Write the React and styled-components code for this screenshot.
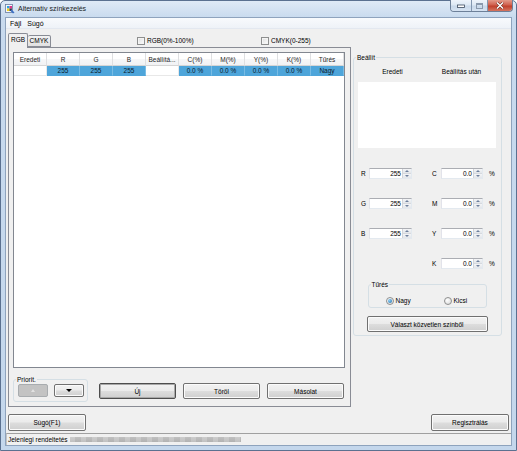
import React from "react";
import styled, { createGlobalStyle, css } from "styled-components";

const GlobalStyle = createGlobalStyle`
  html, body { margin: 0; padding: 0; }
  body {
    width: 517px; height: 451px; overflow: hidden;
    font-family: "Liberation Sans", Arial, sans-serif;
    font-size: 6.5px; color: #000;
  }
  * { box-sizing: border-box; }
`;

const Window = styled.div`
  width: 517px; height: 451px;
  border: 1px solid #5b7190;
  border-radius: 5px 5px 0 0;
  background: linear-gradient(#dfeaf6 0px, #c8daee 17px, #c4d7ec 100%);
  display: flex; flex-direction: column;
`;

const TitleBar = styled.div`
  height: 16px; display: flex; align-items: flex-start;
  padding-left: 4px;
`;

const TitleIcon = styled.svg`
  width: 10px; height: 11px; margin-top: 2px; margin-right: 3px; flex: none;
`;

const TitleText = styled.div`
  font-size: 7px; line-height: 16px; color: #1b1b1b;
`;

const Controls = styled.div`
  margin-left: auto; margin-right: 3px; margin-top: -1px;
  display: flex; height: 12px;
  border: 1px solid #6d8099; border-top: none;
  border-radius: 0 0 4px 4px; overflow: hidden;
`;

const CtrlBtn = styled.div`
  width: ${p => p.$w}px; height: 100%;
  display: flex; align-items: center; justify-content: center;
  border-left: ${p => (p.$first ? "none" : "1px solid #8296b0")};
  background: ${p =>
    p.$close
      ? "linear-gradient(#e39a8a 0%, #d0604e 45%, #c1402c 55%, #d57560 100%)"
      : "linear-gradient(#eef4fb 0%, #dde8f4 45%, #c8d8ea 55%, #d6e3f2 100%)"};
`;

const Inner = styled.div`
  flex: 1; margin: 0 4px 4px 4px;
  border: 1px solid #8ea3bd;
  background: #f0f0f0;
  display: flex; flex-direction: column;
`;

const MenuBar = styled.div`
  height: 11px; display: flex; align-items: center;
  padding-left: 1px;
  background: linear-gradient(#f8fafd, #eef2f8);
  border-bottom: 1px solid #e3e8f0;
`;

const MenuItem = styled.span`
  padding: 0 3px; font-size: 7px; line-height: 11px;
`;

const Client = styled.div`
  height: 404px; padding: 4px 2px 2px 2px;
  display: flex; flex-direction: column;
`;

const TabHeader = styled.div`
  height: 14px; display: flex; align-items: flex-end;
`;

const Tab = styled.div`
  width: ${p => p.$w}px;
  height: ${p => (p.$active ? 15 : 12)}px;
  margin-bottom: ${p => (p.$active ? -1 : 0)}px;
  position: relative; z-index: ${p => (p.$active ? 2 : 0)};
  border: 1px solid #898c95;
  border-bottom: ${p => (p.$active ? "none" : "1px solid #898c95")};
  border-left: ${p => (p.$active ? "1px solid #898c95" : "none")};
  border-radius: 2px 2px 0 0;
  background: ${p => (p.$active ? "#f0f0f0" : "linear-gradient(#f3f3f3, #e1e1e1)")};
  display: flex; align-items: center; justify-content: center;
  padding-bottom: ${p => (p.$active ? 2 : 0)}px;
  line-height: 10px; font-weight: normal;
`;

const CheckItem = styled.label`
  display: flex; align-items: center; align-self: center;
  width: ${p => p.$w}px; margin-left: ${p => p.$ml || 0}px;
  margin-bottom: -1px;
`;

const CheckBox = styled.span`
  width: 8px; height: 8px; flex: none;
  border: 1px solid #8e8f8f;
  background: linear-gradient(135deg, #dcdcdc, #ffffff);
  box-shadow: inset 0 0 0 1px #f4f4f4;
  margin-right: 2px;
`;

const MainRow = styled.div`
  height: 360px; display: flex; align-items: flex-start;
`;

const TabPanel = styled.div`
  width: 343px; height: 360px;
  border: 1px solid #898c95;
  background: #f0f0f0;
  padding: 4px;
  display: flex; flex-direction: column;
`;

const Table = styled.div`
  width: 332px; height: 316px;
  border: 1px solid #828790;
  background: #fff;
  display: grid;
  grid-template-columns: repeat(10, 33px);
  grid-auto-rows: min-content;
`;

const HeadCell = styled.div`
  height: 13px;
  display: flex; align-items: center; justify-content: center;
  background: linear-gradient(#ffffff 0%, #ffffff 50%, #f6f7f8 50%, #f1f2f4 100%);
  border-right: 1px solid #dedfe1;
  border-bottom: 1px solid #d5d5d5;
  white-space: nowrap; overflow: hidden;
  color: #1e1e1e;
`;

const DataCell = styled.div`
  height: 10px;
  display: flex; align-items: center; justify-content: center;
  background: ${p => (p.$sel ? "#4ea5da" : "#ffffff")};
  border-right: 1px solid ${p => (p.$sel ? "#79bce4" : "#e8e8e8")};
  border-bottom: 1px solid ${p => (p.$sel ? "#4ea5da" : "#e8e8e8")};
  line-height: 10px; color: #0c1a2a;
`;

const PanelBottom = styled.div`
  margin-top: 11px; display: flex; align-items: flex-start;
`;

const GroupBox = styled.div`
  position: relative;
  width: ${p => (p.$w ? `${p.$w}px` : "auto")};
  border: 1px solid #d5dfe5;
  border-radius: 3px;
`;

const Legend = styled.span`
  position: absolute; top: -4px; left: 2px;
  padding: 0 1px; background: #f0f0f0;
  line-height: 7px;
`;

const PriorBox = styled(GroupBox)`
  height: 23px; padding: 4px 0 0 4px;
  display: flex; gap: 6px;
`;

const buttonBase = css`
  font-family: "Liberation Sans", Arial, sans-serif;
  font-size: 6.5px; color: #000;
  padding: 0; margin: 0;
  border: 1px solid #707070;
  border-radius: 2px;
  background: linear-gradient(#f2f2f2 0%, #ebebeb 48%, #dddddd 52%, #cfcfcf 100%);
  box-shadow: inset 0 0 0 1px #fbfbfb;
  display: flex; align-items: center; justify-content: center;
`;

const Button = styled.button`
  ${buttonBase}
  width: ${p => p.$w}px; height: ${p => p.$h || 17}px;
  margin-left: ${p => p.$ml || 0}px;
  margin-top: ${p => p.$mt || 0}px;
  ${p =>
    p.$default &&
    css`
      border-color: #4d4d4d;
      box-shadow: inset 0 0 0 1px #a9a9a9;
    `}
  ${p =>
    p.$disabled &&
    css`
      border-color: #a8acaf;
      background: #c3c3c3;
      box-shadow: none;
    `}
`;

const ArrowUp = styled.span`
  width: 0; height: 0;
  border-left: 2px solid transparent; border-right: 2px solid transparent;
  border-bottom: 3px solid #e2e2e2;
`;

const ArrowDown = styled.span`
  width: 0; height: 0;
  border-left: 3px solid transparent; border-right: 3px solid transparent;
  border-top: 3px solid #000;
`;

const RightCol = styled(GroupBox)`
  width: 149px; margin-left: 2px; margin-top: 10px;
  padding: 9px 5px 3px 4px;
  display: flex; flex-direction: column;
`;

const PreviewHead = styled.div`
  display: flex; height: 10px; line-height: 10px;
`;

const PreviewLabel = styled.div`
  flex: 1; text-align: center;
`;

const Preview = styled.div`
  margin-top: 5px; height: 66px; background: #fff;
`;

const SpinRow = styled.div`
  display: flex; align-items: center; height: 11px;
  margin-top: ${p => p.$mt}px;
`;

const SpinLabel = styled.span`
  width: ${p => p.$w}px; flex: none;
  margin-left: ${p => p.$ml || 0}px;
  line-height: 11px;
`;

const Spin = styled.div`
  display: flex; height: 11px; width: ${p => p.$w}px; flex: none;
  border: 1px solid #abadb3;
  border-color: #abadb3 #e3e9ef #e3e9ef #e2e3ea;
  background: #fff;
`;

const SpinValue = styled.div`
  flex: 1; text-align: right; padding-right: 1px;
  line-height: 9px;
`;

const SpinBtns = styled.div`
  width: 9px; display: flex; flex-direction: column;
  border-left: 1px solid #d2d5da;
`;

const SpinHalf = styled.div`
  flex: 1; display: flex; align-items: center; justify-content: center;
  background: linear-gradient(#f4f5f7, #e3e6ea);
  border-bottom: ${p => (p.$top ? "1px solid #d6d9de" : "none")};
`;

const Tiny = styled.span`
  width: 0; height: 0;
  border-left: 2px solid transparent; border-right: 2px solid transparent;
  ${p =>
    p.$up
      ? "border-bottom: 2px solid #6c7f9c;"
      : "border-top: 2px solid #6c7f9c;"}
`;

const Percent = styled.span`
  margin-left: 6px;
`;

const TuresBox = styled(GroupBox)`
  width: 119px; height: 24px; margin: 15px auto 0 auto;
  padding: 9px 0 0 17px;
  display: flex; align-items: center;
`;

const RadioItem = styled.label`
  display: flex; align-items: center;
  width: ${p => p.$w}px;
`;

const Radio = styled.span`
  width: 8px; height: 8px; border-radius: 50%; flex: none;
  border: 1px solid #8e8f8f;
  background: radial-gradient(circle at 35% 35%, #ffffff, #d6d6d6);
  display: flex; align-items: center; justify-content: center;
  margin-right: 2px;
  &::after {
    content: "";
    display: ${p => (p.$on ? "block" : "none")};
    width: 4px; height: 4px; border-radius: 50%;
    background: radial-gradient(circle at 35% 35%, #8ed2f8, #1c6aa8);
  }
`;

const WideButton = styled(Button)`
  align-self: center;
`;

const BottomRow = styled.div`
  margin-top: 7px; height: 17px;
  display: flex; justify-content: space-between;
`;

const StatusBar = styled.div`
  height: 12px; display: flex; align-items: center;
  border-top: 1px solid #a0a0a0;
  border-left: 1px solid #c4c4c4;
  background: #f0f0f0;
  padding-left: 1px;
`;

const StatusText = styled.span`
  line-height: 10px; margin-right: 2px; white-space: nowrap;
`;

const StatusGauge = styled.div`
  width: 171px; height: 5px;
  background:
    repeating-linear-gradient(90deg, rgba(255,255,255,0.12) 0 5px, rgba(0,0,0,0.03) 5px 11px),
    linear-gradient(#c6c6c6, #b8b8b8);
`;

const headers = ["Eredeti", "R", "G", "B", "Beállítá...", "C(%)", "M(%)", "Y(%)", "K(%)", "Tűrés"];
const row = [
  { v: "", s: false },
  { v: "255", s: true },
  { v: "255", s: true },
  { v: "255", s: true },
  { v: "", s: false },
  { v: "0.0 %", s: true },
  { v: "0.0 %", s: true },
  { v: "0.0 %", s: true },
  { v: "0.0 %", s: true },
  { v: "Nagy", s: true },
];

const SpinBox = ({ w, value }) => (
  <Spin $w={w}>
    <SpinValue>{value}</SpinValue>
    <SpinBtns>
      <SpinHalf $top><Tiny $up /></SpinHalf>
      <SpinHalf><Tiny /></SpinHalf>
    </SpinBtns>
  </Spin>
);

const spinRows = [
  { l: "R", v: "255", c: "C", mt: 20 },
  { l: "G", v: "255", c: "M", mt: 19 },
  { l: "B", v: "255", c: "Y", mt: 19 },
  { l: null, v: null, c: "K", mt: 19 },
];

export default function App() {
  return (
    <>
      <GlobalStyle />
      <Window>
        <TitleBar>
          <TitleIcon viewBox="0 0 10 11">
            <rect x="0.5" y="1.5" width="7" height="8" fill="#f4f6fa" stroke="#6a7ea0" strokeWidth="0.8" />
            <rect x="2" y="3" width="2.5" height="2.5" fill="#2aa7e0" />
            <rect x="4.5" y="3" width="2.5" height="2.5" fill="#e0338a" />
            <rect x="2" y="5.5" width="2.5" height="2.5" fill="#f3d21c" />
            <rect x="4.5" y="5.5" width="2.5" height="2.5" fill="#333" />
            <path d="M6 6 L9.5 9.5 L8 10.5 L5.5 8 Z" fill="#3b6fc4" />
          </TitleIcon>
          <TitleText>Alternatív színkezelés</TitleText>
          <Controls>
            <CtrlBtn $w={20} $first>
              <svg width="8" height="4" viewBox="0 0 8 4">
                <rect x="0.5" y="1" width="7" height="2.5" fill="#fff" stroke="#3c4a5e" strokeWidth="0.8" />
              </svg>
            </CtrlBtn>
            <CtrlBtn $w={16}>
              <svg width="7" height="6" viewBox="0 0 7 6">
                <rect x="0.5" y="0.5" width="6" height="5" fill="none" stroke="#8a99ad" strokeWidth="1" />
                <rect x="1" y="1" width="5" height="1" fill="#8a99ad" />
              </svg>
            </CtrlBtn>
            <CtrlBtn $w={25} $close>
              <svg width="8" height="7" viewBox="0 0 8 7">
                <path d="M1 0.5 L7 6.5 M7 0.5 L1 6.5" stroke="#5a1a10" strokeWidth="2.4" />
                <path d="M1 0.5 L7 6.5 M7 0.5 L1 6.5" stroke="#fff" strokeWidth="1.5" />
              </svg>
            </CtrlBtn>
          </Controls>
        </TitleBar>
        <Inner>
          <MenuBar>
            <MenuItem>Fájl</MenuItem>
            <MenuItem>Súgó</MenuItem>
          </MenuBar>
          <Client>
            <TabHeader>
              <Tab $w={20} $active>RGB</Tab>
              <Tab $w={23}>CMYK</Tab>
              <CheckItem $w={124} $ml={86}>
                <CheckBox />
                RGB(0%-100%)
              </CheckItem>
              <CheckItem $w={80}>
                <CheckBox />
                CMYK(0-255)
              </CheckItem>
            </TabHeader>
            <MainRow>
              <TabPanel>
                <Table>
                  {headers.map(h => (
                    <HeadCell key={h}>{h}</HeadCell>
                  ))}
                  {row.map((c, i) => (
                    <DataCell key={i} $sel={c.s}>{c.v}</DataCell>
                  ))}
                </Table>
                <PanelBottom>
                  <PriorBox $w={75}>
                    <Legend>Priorit.</Legend>
                    <Button $w={30} $h={13} $disabled><ArrowUp /></Button>
                    <Button $w={30} $h={13}><ArrowDown /></Button>
                  </PriorBox>
                  <Button $w={77} $h={16} $ml={11} $mt={4} $default>Új</Button>
                  <Button $w={77} $h={16} $ml={7} $mt={4}>Töröl</Button>
                  <Button $w={77} $h={16} $ml={7} $mt={4}>Másolat</Button>
                </PanelBottom>
              </TabPanel>
              <RightCol>
                <Legend>Beállít</Legend>
                <PreviewHead>
                  <PreviewLabel>Eredeti</PreviewLabel>
                  <PreviewLabel>Beállítás után</PreviewLabel>
                </PreviewHead>
                <Preview />
                {spinRows.map(r => (
                  <SpinRow key={r.c} $mt={r.mt}>
                    <SpinLabel $w={8} $ml={3}>{r.l}</SpinLabel>
                    {r.v ? <SpinBox w={43} value={r.v} /> : <SpinLabel $w={43} />}
                    <SpinLabel $w={9} $ml={20}>{r.c}</SpinLabel>
                    <SpinBox w={42} value="0.0" />
                    <Percent>%</Percent>
                  </SpinRow>
                ))}
                <TuresBox>
                  <Legend>Tűrés</Legend>
                  <RadioItem $w={58}>
                    <Radio $on />
                    Nagy
                  </RadioItem>
                  <RadioItem $w={40}>
                    <Radio />
                    Kicsi
                  </RadioItem>
                </TuresBox>
                <WideButton $w={121} $h={16} $mt={8}>Választ közvetlen színből</WideButton>
              </RightCol>
            </MainRow>
            <BottomRow>
              <Button $w={78} $h={17}>Súgó(F1)</Button>
              <Button $w={78} $h={17}>Regisztrálás</Button>
            </BottomRow>
          </Client>
          <StatusBar>
            <StatusText>Jelenlegi rendeltetés</StatusText>
            <StatusGauge />
          </StatusBar>
        </Inner>
      </Window>
    </>
  );
}
